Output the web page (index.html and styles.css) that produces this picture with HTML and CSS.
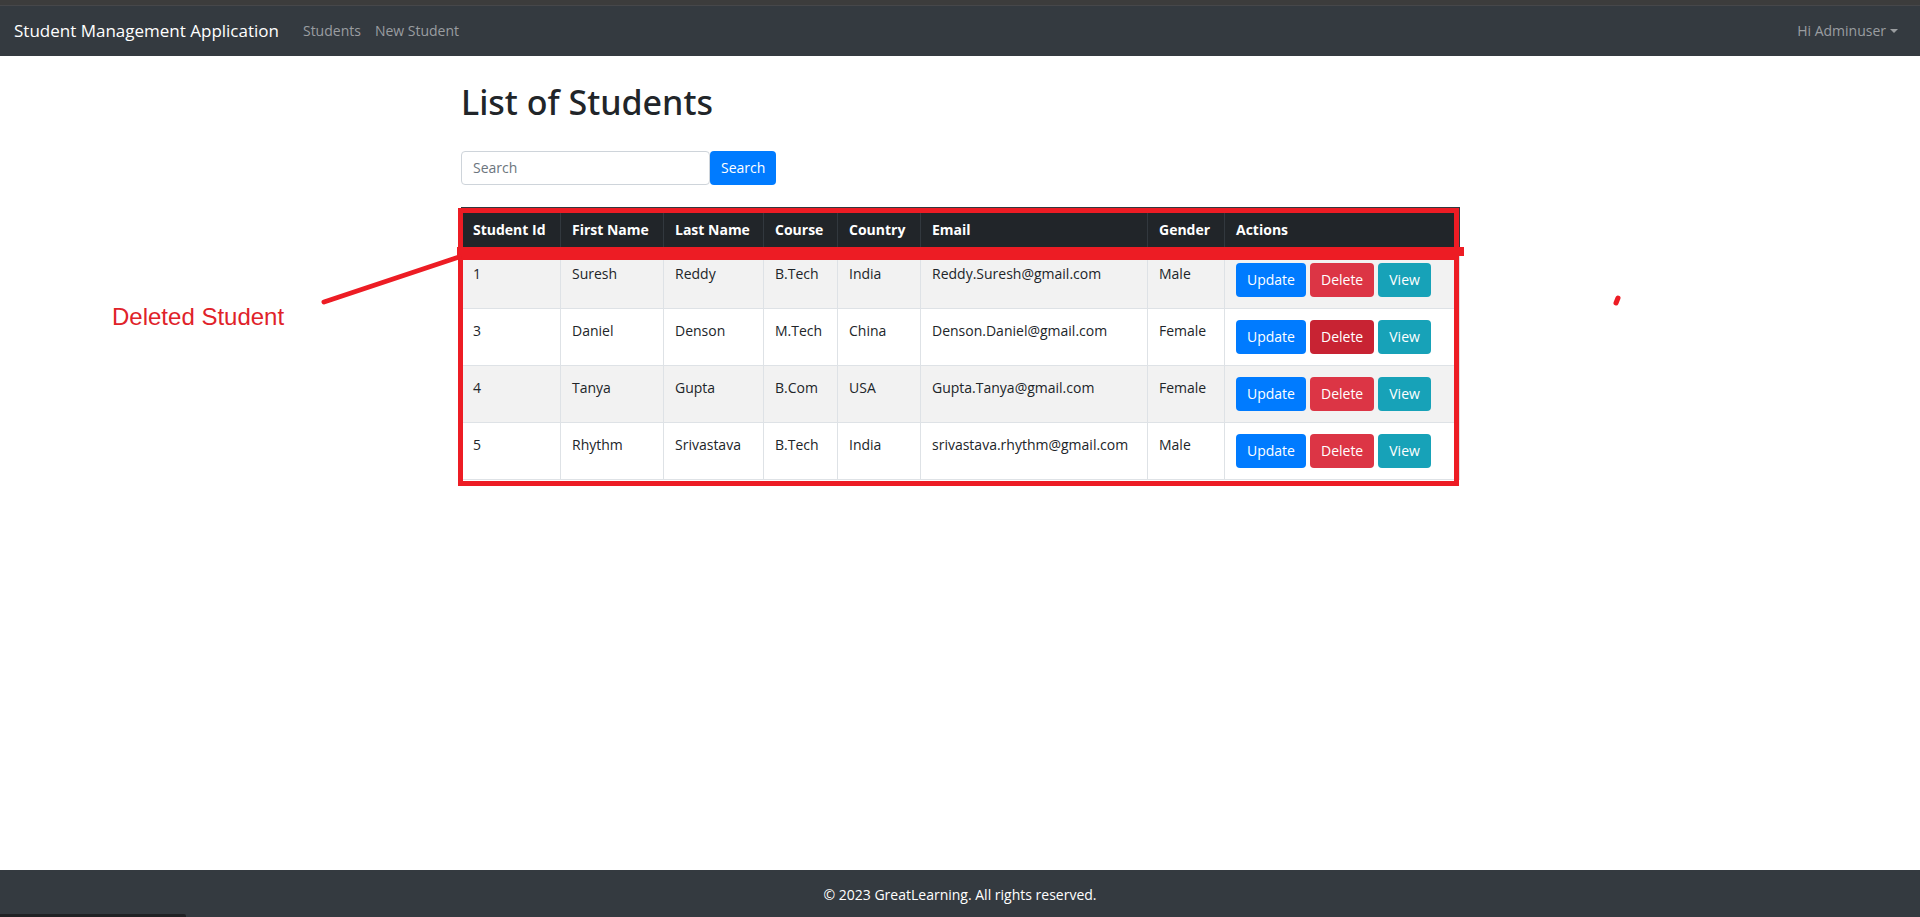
FILE: index.html
```
<!DOCTYPE html>
<html lang="en">
<head>
<meta charset="utf-8">
<title>Student Management Application</title>
<link rel="stylesheet" href="styles.css">
</head>
<body>
<header class="navbar">
  <a class="brand" href="#">Student Management Application</a>
  <nav class="nav-links">
    <a href="#">Students</a>
    <a href="#">New Student</a>
  </nav>
  <button class="user-menu" type="button">Hi Adminuser<span class="caret"></span></button>
</header>

<main class="container">
  <h1>List of Students</h1>
  <form class="search">
    <input type="text" placeholder="Search" aria-label="Search">
    <button class="btn btn-primary" type="button">Search</button>
  </form>

  <div class="table-wrap">
    <table class="students">
      <colgroup>
        <col class="c-id"><col class="c-first"><col class="c-last"><col class="c-course"><col class="c-country"><col class="c-email"><col class="c-gender"><col>
      </colgroup>
      <thead>
        <tr><th>Student Id</th><th>First Name</th><th>Last Name</th><th>Course</th><th>Country</th><th>Email</th><th>Gender</th><th>Actions</th></tr>
      </thead>
      <tbody>
        <tr>
          <td>1</td><td>Suresh</td><td>Reddy</td><td>B.Tech</td><td>India</td><td>Reddy.Suresh@gmail.com</td><td>Male</td>
          <td><div class="actions"><a class="btn btn-primary" href="#">Update</a><a class="btn btn-danger" href="#">Delete</a><a class="btn btn-info" href="#">View</a></div></td>
        </tr>
        <tr>
          <td>3</td><td>Daniel</td><td>Denson</td><td>M.Tech</td><td>China</td><td>Denson.Daniel@gmail.com</td><td>Female</td>
          <td><div class="actions"><a class="btn btn-primary" href="#">Update</a><a class="btn btn-danger pressed" href="#">Delete</a><a class="btn btn-info" href="#">View</a></div></td>
        </tr>
        <tr>
          <td>4</td><td>Tanya</td><td>Gupta</td><td>B.Com</td><td>USA</td><td>Gupta.Tanya@gmail.com</td><td>Female</td>
          <td><div class="actions"><a class="btn btn-primary" href="#">Update</a><a class="btn btn-danger" href="#">Delete</a><a class="btn btn-info" href="#">View</a></div></td>
        </tr>
        <tr>
          <td>5</td><td>Rhythm</td><td>Srivastava</td><td>B.Tech</td><td>India</td><td>srivastava.rhythm@gmail.com</td><td>Male</td>
          <td><div class="actions"><a class="btn btn-primary" href="#">Update</a><a class="btn btn-danger" href="#">Delete</a><a class="btn btn-info" href="#">View</a></div></td>
        </tr>
      </tbody>
    </table>

    <div class="mark mark-head"></div>
    <div class="mark mark-body"></div>
    <div class="mark-bar"></div>
    <svg class="mark-lines" width="10" height="10" aria-hidden="true">
      <path d="M-137 95L-2 50" stroke-width="5"/>
      <path d="M1157 91L1155 96" stroke-width="5"/>
    </svg>
    <div class="mark-label">Deleted Student</div>
  </div>
</main>

<footer class="footer">© 2023 GreatLearning. All rights reserved.</footer>
<div class="status-edge"></div>
</body>
</html>
```
FILE: styles.css
```
* { box-sizing: border-box; }

body {
  margin: 0;
  min-height: 100vh;
  display: flex;
  flex-direction: column;
  background: #fff;
  color: #212529;
  font: 14px/22px "Open Sans", "Noto Sans", sans-serif;
}

a { text-decoration: none; }

.navbar {
  display: flex;
  align-items: center;
  height: 56px;
  padding: 6px 22px 0 14px;
  background: linear-gradient(#3c3c3c 5px, #46474a 5px, #46474a 6px, #343a40 6px);
}
.brand { color: #fff; font-size: 17px; line-height: 28px; }
.nav-links { display: flex; gap: 14px; margin-left: 24px; }
.nav-links a, .user-menu { color: #9a9da0; }
.user-menu {
  display: flex;
  align-items: center;
  gap: 4px;
  margin-left: auto;
  padding: 0;
  border: 0;
  background: none;
  font: inherit;
}
.caret {
  border: 4px solid transparent;
  border-top-color: currentColor;
  border-bottom: 0;
}

.container {
  width: 100%;
  max-width: 1026px;
  margin: 0 auto;
  padding: 24px 13px 0 14px;
  flex: 1;
}
h1 { margin: 0; font: 500 34px/44px "Noto Sans", "Open Sans", sans-serif; }

.search { display: flex; margin: 27px 0 22px; }
.search input {
  width: 249px;
  height: 34px;
  padding: 0 11px 1px;
  border: 1px solid #ced4da;
  border-radius: 4px;
  font: inherit;
}
.search input::placeholder { color: #6c757d; opacity: 1; }

.btn {
  height: 34px;
  padding: 0 11px;
  border: 0;
  border-radius: 4px;
  color: #fff;
  font: inherit;
  line-height: 34px;
  text-align: center;
}
.btn-primary { background: #007bff; }
.btn-danger { background: #dc3545; }
.btn-danger.pressed { background: #c82333; }
.btn-info { background: #17a2b8; }

.table-wrap { position: relative; }
.students { width: 100%; border-collapse: collapse; }
.students th, .students td {
  padding: 11px;
  border: 1px solid #dee2e6;
  text-align: left;
  vertical-align: top;
}
.students th {
  padding-bottom: 10px;
  background: #212529;
  border-color: #32383e;
  color: #fff;
  font-weight: 700;
}
.students tbody tr:nth-child(odd) { background: #f2f2f2; }
.c-id { width: 99px; }
.c-first { width: 103px; }
.c-last { width: 100px; }
.c-course { width: 74px; }
.c-country { width: 83px; }
.c-email { width: 227px; }
.c-gender { width: 77px; }
.actions { display: flex; gap: 4px; }

/* Red annotations laid over the table */
.mark { position: absolute; left: -3px; right: 1px; border: 5px solid #ed1c24; }
.mark-head { top: 1px; height: 44px; }
.mark-body { top: 48px; bottom: -6px; }
.mark-bar { position: absolute; left: -4px; right: -4px; top: 40px; height: 9px; background: #ed1c24; }
.mark-lines {
  position: absolute;
  left: 0;
  top: 0;
  overflow: visible;
  fill: none;
  stroke: #ed1c24;
  stroke-linecap: round;
  pointer-events: none;
}
.mark-label {
  position: absolute;
  left: -349px;
  top: 96px;
  color: #e02229;
  font: 24px/28px "Liberation Sans", Arial, sans-serif;
  white-space: nowrap;
}

.footer {
  padding: 14px 0 11px;
  background: #343a40;
  color: #fff;
  text-align: center;
}
.status-edge {
  position: fixed;
  left: 0;
  bottom: 0;
  width: 186px;
  height: 3px;
  border-top-right-radius: 2px;
  background: #202124;
}
```
